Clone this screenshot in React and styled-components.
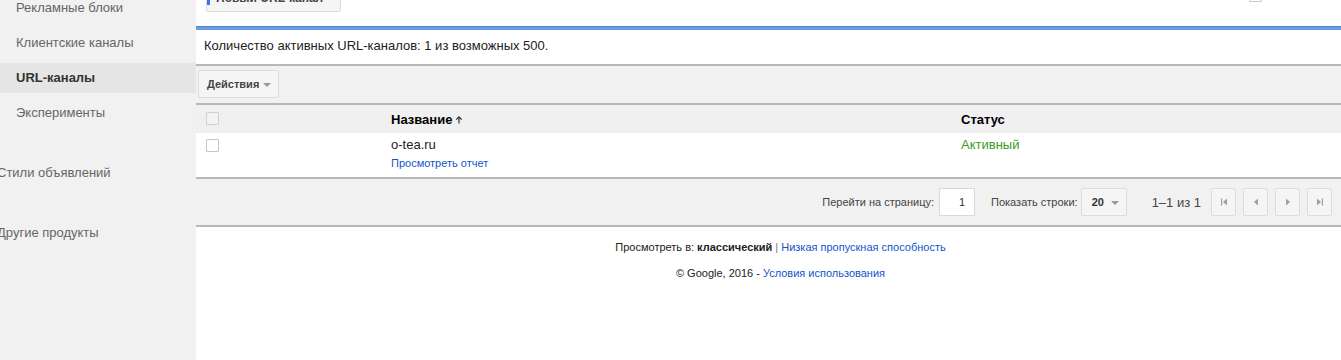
import React from "react";
import styled, { createGlobalStyle } from "styled-components";

const GlobalStyle = createGlobalStyle`
  html, body { margin: 0; padding: 0; background: #fff; }
  body { font-family: "Liberation Sans", Arial, sans-serif; overflow: hidden; }
  * { box-sizing: border-box; }
`;

const Layout = styled.div`
  display: flex;
  min-height: 100vh;
`;

const Sidebar = styled.nav`
  width: 196px;
  flex-shrink: 0;
  background: #f1f1f1;
  display: flex;
  flex-direction: column;
  overflow: hidden;
`;

const NavItem = styled.div`
  height: 30px;
  margin-bottom: 5px;
  padding: 0 0 1px 16px;
  display: flex;
  align-items: center;
  font-size: 13px;
  color: ${(p) => (p.$active ? "#333" : "#666")};
  font-weight: ${(p) => (p.$active ? "bold" : "normal")};
  background: ${(p) => (p.$active ? "#e5e5e5" : "transparent")};
  &:first-child { margin-top: -7px; }
`;

const NavSection = styled.div`
  height: 30px;
  margin-top: 24px;
  margin-bottom: 5px;
  margin-left: -3px;
  display: flex;
  align-items: center;
  font-size: 13px;
  color: #666;
  white-space: nowrap;
  & + & { margin-top: 25px; }
`;

const Main = styled.main`
  flex: 1;
  min-width: 0;
  background: #fff;
  display: flex;
  flex-direction: column;
`;

const TopBar = styled.div`
  height: 26px;
  display: flex;
  justify-content: space-between;
  align-items: flex-start;
  padding: 0 79px 0 10px;
`;

const NewButton = styled.div`
  margin-top: -17px;
  height: 29px;
  width: 135px;
  border: 1px solid #dcdcdc;
  border-radius: 2px;
  background: #f5f5f5;
  display: flex;
  align-items: center;
  gap: 6px;
  padding-left: 0;
  font-size: 12px;
  font-weight: bold;
  color: #444;
  white-space: nowrap;
  overflow: hidden;
`;

const PlusBar = styled.span`
  width: 3px;
  height: 14px;
  background: #3b78e7;
  margin-left: 0;
  flex-shrink: 0;
`;

const Check = styled.span`
  display: block;
  width: 13px;
  height: 13px;
  border: 1px solid ${(p) => (p.$muted ? "#d0d0d0" : "#c6c6c6")};
  border-radius: 1px;
  background: ${(p) => (p.$muted ? "#f3f3f3" : "#fff")};
  margin-top: ${(p) => p.$top || 0}px;
`;

const BlueRule = styled.div`
  height: 4px;
  border-top: 1px solid #4a84d6;
  background: #6a9de0;
`;

const InfoLine = styled.div`
  height: 34px;
  padding: 8px 8px 0;
  line-height: 16px;
  font-size: 13px;
  color: #222;
`;

const Divider = styled.div`
  height: 2px;
  background: #b8b8b8;
`;

const Toolbar = styled.div`
  height: 37px;
  background: #f1f1f1;
  padding: 4px 2px 0;
  display: flex;
  align-items: flex-start;
`;

const MenuButton = styled.div`
  height: 28px;
  padding: 0 7px 0 8px;
  border: 1px solid #dcdcdc;
  border-radius: 2px;
  background: #f5f5f5;
  display: flex;
  align-items: center;
  gap: 4px;
  font-size: 11px;
  font-weight: bold;
  color: #444;
`;

const Caret = styled.span`
  width: 0;
  height: 0;
  border-left: 4px solid transparent;
  border-right: 4px solid transparent;
  border-top: 4px solid #999;
  margin-top: 1px;
`;

const Grid = styled.div`
  display: grid;
  grid-template-columns: 195px 570px 1fr;
  height: ${(p) => p.$h}px;
  background: ${(p) => p.$bg};
`;

const CheckCell = styled.div`
  padding-left: 10px;
`;

const HeadCell = styled.div`
  display: flex;
  align-items: center;
  gap: 3px;
  font-size: 13px;
  font-weight: bold;
  color: #000;
`;

const Cell = styled.div`
  padding-top: 4px;
  display: flex;
  flex-direction: column;
  align-items: flex-start;
`;

const Domain = styled.span`
  font-size: 13px;
  line-height: 16px;
  color: #222;
`;

const ReportLink = styled.span`
  margin-top: 3px;
  font-size: 11px;
  line-height: 14px;
  color: #15c;
`;

const Status = styled.span`
  font-size: 13px;
  line-height: 16px;
  color: #3a9c1f;
`;

const Pager = styled.div`
  height: 46px;
  background: #f1f1f1;
  display: flex;
  justify-content: flex-end;
  align-items: center;
  padding-right: 9px;
`;

const PagerLabel = styled.span`
  font-size: 11px;
  color: #444;
  margin-right: ${(p) => p.$mr || 0}px;
`;

const PageInput = styled.div`
  width: 36px;
  height: 28px;
  border: 1px solid #d9d9d9;
  background: #fff;
  display: flex;
  align-items: center;
  justify-content: flex-end;
  padding-right: 9px;
  font-size: 11px;
  color: #333;
  margin-right: 16px;
`;

const RowsSelect = styled.div`
  width: 46px;
  height: 28px;
  border: 1px solid #dcdcdc;
  border-radius: 2px;
  background: #f5f5f5;
  display: flex;
  align-items: center;
  gap: 7px;
  padding-left: 10px;
  font-size: 11px;
  font-weight: bold;
  color: #333;
  margin-left: 3px;
  margin-right: 25px;
`;

const RangeText = styled.span`
  font-size: 13px;
  color: #444;
  margin-right: 10px;
`;

const PageButtons = styled.div`
  display: flex;
  gap: 7px;
`;

const PageBtn = styled.div`
  width: 25px;
  height: 28px;
  border: 1px solid #dcdcdc;
  border-radius: 2px;
  background: #f5f5f5;
  display: flex;
  align-items: center;
  justify-content: center;
`;

const Footer = styled.footer`
  padding: 13px 0 0 24px;
  display: flex;
  flex-direction: column;
  align-items: center;
  font-size: 11px;
  line-height: 14px;
  color: #222;
`;

const FooterLine = styled.div`
  margin-top: ${(p) => p.$mt || 0}px;
`;

const Link = styled.span`
  color: #15c;
`;

const Sep = styled.span`
  color: #777;
  margin: 0 3px;
`;

const SortArrow = () => (
  <svg width="8" height="9" viewBox="0 0 8 9">
    <path d="M4 1 L7.2 4.2 L6.3 5 L4.6 3.3 L4.6 8.5 L3.4 8.5 L3.4 3.3 L1.7 5 L0.8 4.2 Z" fill="#333" />
  </svg>
);

const PagerIcon = ({ kind }) => {
  const fill = "#a0a0a0";
  if (kind === "first")
    return (
      <svg width="8" height="8" viewBox="0 0 8 8">
        <rect x="1" y="0.5" width="1.2" height="7" fill={fill} />
        <path d="M7 0.5 L3 4 L7 7.5 Z" fill={fill} />
      </svg>
    );
  if (kind === "prev")
    return (
      <svg width="8" height="8" viewBox="0 0 8 8">
        <path d="M6 0.5 L2 4 L6 7.5 Z" fill={fill} />
      </svg>
    );
  if (kind === "next")
    return (
      <svg width="8" height="8" viewBox="0 0 8 8">
        <path d="M2 0.5 L6 4 L2 7.5 Z" fill={fill} />
      </svg>
    );
  return (
    <svg width="8" height="8" viewBox="0 0 8 8">
      <path d="M1 0.5 L5 4 L1 7.5 Z" fill={fill} />
      <rect x="5.8" y="0.5" width="1.2" height="7" fill={fill} />
    </svg>
  );
};

export default function App() {
  return (
    <>
      <GlobalStyle />
      <Layout>
        <Sidebar>
          <NavItem>Рекламные блоки</NavItem>
          <NavItem>Клиентские каналы</NavItem>
          <NavItem $active>URL-каналы</NavItem>
          <NavItem>Эксперименты</NavItem>
          <NavSection>Стили объявлений</NavSection>
          <NavSection>Другие продукты</NavSection>
        </Sidebar>
        <Main>
          <TopBar>
            <NewButton>
              <PlusBar />
              Новый URL-канал
            </NewButton>
            <Check $top={-11} />
          </TopBar>
          <BlueRule />
          <InfoLine>Количество активных URL-каналов: 1 из возможных 500.</InfoLine>
          <Divider />
          <Toolbar>
            <MenuButton>
              Действия
              <Caret />
            </MenuButton>
          </Toolbar>
          <Divider />
          <Grid $h={28} $bg="#f0f0f0">
            <CheckCell>
              <Check $muted $top={7} />
            </CheckCell>
            <HeadCell>
              Название
              <SortArrow />
            </HeadCell>
            <HeadCell>Статус</HeadCell>
          </Grid>
          <Grid $h={44} $bg="#fff">
            <CheckCell>
              <Check $top={6} />
            </CheckCell>
            <Cell>
              <Domain>o-tea.ru</Domain>
              <ReportLink>Просмотреть отчет</ReportLink>
            </Cell>
            <Cell>
              <Status>Активный</Status>
            </Cell>
          </Grid>
          <Divider />
          <Pager>
            <PagerLabel $mr={5}>Перейти на страницу:</PagerLabel>
            <PageInput>1</PageInput>
            <PagerLabel>Показать строки:</PagerLabel>
            <RowsSelect>
              20
              <Caret />
            </RowsSelect>
            <RangeText>1–1 из 1</RangeText>
            <PageButtons>
              <PageBtn><PagerIcon kind="first" /></PageBtn>
              <PageBtn><PagerIcon kind="prev" /></PageBtn>
              <PageBtn><PagerIcon kind="next" /></PageBtn>
              <PageBtn><PagerIcon kind="last" /></PageBtn>
            </PageButtons>
          </Pager>
          <Divider />
          <Footer>
            <FooterLine>
              Просмотреть в: <b>классический</b>
              <Sep>|</Sep>
              <Link>Низкая пропускная способность</Link>
            </FooterLine>
            <FooterLine $mt={12}>
              © Google, 2016 - <Link>Условия использования</Link>
            </FooterLine>
          </Footer>
        </Main>
      </Layout>
    </>
  );
}
